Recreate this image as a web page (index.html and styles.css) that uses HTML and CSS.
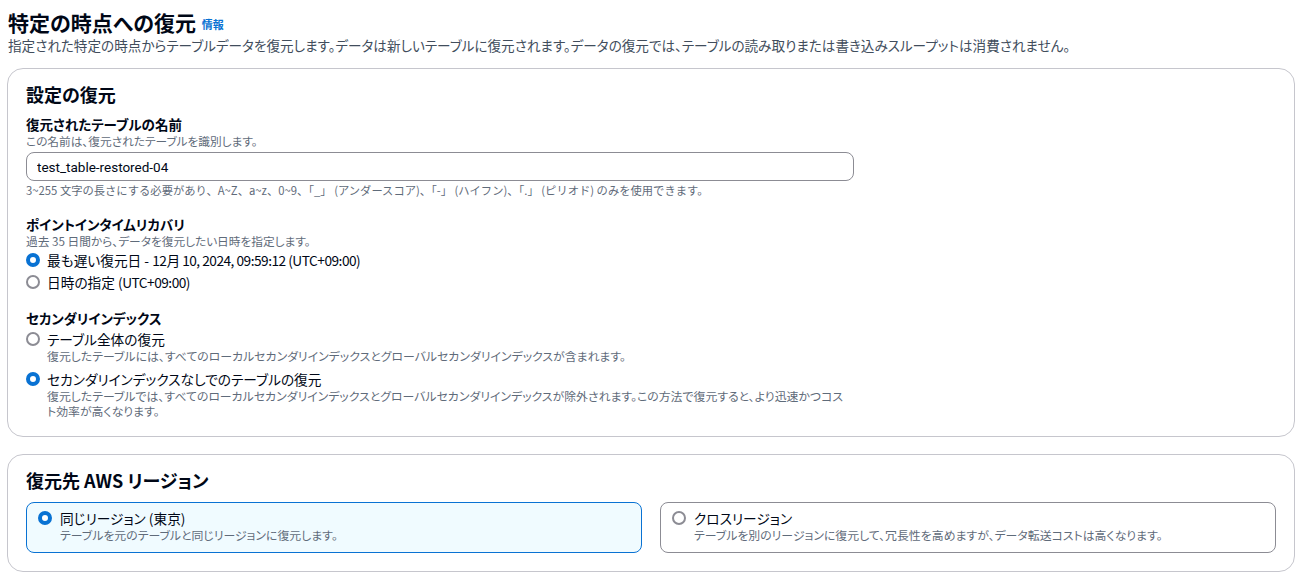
FILE: index.html
```html
<!DOCTYPE html>
<html lang="ja">
<head>
<meta charset="utf-8">
<title>特定の時点への復元</title>
<link rel="stylesheet" href="styles.css">
</head>
<body>
<main class="page">
  <header class="page-header">
    <h1 class="page-title">特定の時点への復元 <a class="info-link" href="#">情報</a></h1>
    <p class="page-desc">指定された特定の時点からテーブルデータを復元します。データは新しいテーブルに復元されます。データの復元では、テーブルの読み取りまたは書き込みスループットは消費されません。</p>
  </header>

  <section class="card">
    <h2 class="card-title">設定の復元</h2>

    <div class="field">
      <div class="field-label">復元されたテーブルの名前</div>
      <div class="field-desc">この名前は、復元されたテーブルを識別します。</div>
      <input class="text-input" type="text" value="test_table-restored-04">
      <div class="field-hint">3~255 文字の長さにする必要があり、A~Z、a~z、0~9、「_」 (アンダースコア)、「-」 (ハイフン)、「.」 (ピリオド) のみを使用できます。</div>
    </div>

    <div class="field field-pitr">
      <div class="field-label">ポイントインタイムリカバリ</div>
      <div class="field-desc">過去 35 日間から、データを復元したい日時を指定します。</div>
      <div class="radio-group tight">
        <label class="radio-row">
          <span class="radio checked"></span>
          <span class="radio-text">最も遅い復元日 - <span class="timestamp">12月 10, 2024, 09:59:12 (UTC+09:00)</span></span>
        </label>
        <label class="radio-row">
          <span class="radio"></span>
          <span class="radio-text">日時の指定 <span class="timestamp">(UTC+09:00)</span></span>
        </label>
      </div>
    </div>

    <div class="field field-index">
      <div class="field-label">セカンダリインデックス</div>
      <div class="radio-group loose">
        <label class="radio-row">
          <span class="radio"></span>
          <span class="radio-body">
            <span class="radio-text">テーブル全体の復元</span>
            <span class="radio-desc">復元したテーブルには、すべてのローカルセカンダリインデックスとグローバルセカンダリインデックスが含まれます。</span>
          </span>
        </label>
        <label class="radio-row">
          <span class="radio checked"></span>
          <span class="radio-body">
            <span class="radio-text">セカンダリインデックスなしでのテーブルの復元</span>
            <span class="radio-desc">復元したテーブルでは、すべてのローカルセカンダリインデックスとグローバルセカンダリインデックスが除外されます。この方法で復元すると、より迅速かつコスト効率が高くなります。</span>
          </span>
        </label>
      </div>
    </div>
  </section>

  <section class="card card-region">
    <h2 class="card-title">復元先 AWS リージョン</h2>
    <div class="tiles">
      <label class="tile selected">
        <span class="radio checked"></span>
        <span class="radio-body">
          <span class="radio-text">同じリージョン (東京)</span>
          <span class="radio-desc">テーブルを元のテーブルと同じリージョンに復元します。</span>
        </span>
      </label>
      <label class="tile">
        <span class="radio"></span>
        <span class="radio-body">
          <span class="radio-text">クロスリージョン</span>
          <span class="radio-desc">テーブルを別のリージョンに復元して、冗長性を高めますが、データ転送コストは高くなります。</span>
        </span>
      </label>
    </div>
  </section>
</main>
</body>
</html>
```

FILE: styles.css
```css
* {
  box-sizing: border-box;
}

html, body {
  margin: 0;
  padding: 0;
  background: #ffffff;
}

body {
  font-family: "Noto Sans CJK JP", sans-serif;
  font-feature-settings: "palt";
  color: #000716;
}

.page {
  padding: 10px 13px 0 7px;
}

/* Page header */
.page-header {
  padding-left: 1px;
}

.page-title {
  margin: 0;
  font-size: 21px;
  line-height: 25px;
  font-weight: 700;
  color: #000716;
}

.info-link {
  font-size: 11px;
  line-height: 1;
  font-weight: 700;
  color: #0972d3;
  text-decoration: none;
  vertical-align: 2px;
  margin-left: 1px;
}

.page-desc {
  margin: 0;
  font-size: 13.6px;
  line-height: 20px;
  color: #414d5c;
}

/* Containers */
.card {
  margin-top: 13px;
  border: 1px solid #c6c6cd;
  border-radius: 16px;
  padding: 14px 18px 18px;
}

.card-region {
  margin-top: 17px;
  padding: 14px 18px 18px;
}

.card-title {
  margin: 0;
  font-size: 18px;
  line-height: 22px;
  font-weight: 700;
}

.field {
  max-width: 828px;
  margin-top: 10px;
}

.field-pitr {
  margin-top: 18px;
}

.field-index {
  max-width: 820px;
  margin-top: 17px;
}

.field-label {
  font-size: 13.5px;
  line-height: 18px;
  font-weight: 700;
}

.field-desc {
  font-size: 11.7px;
  line-height: 16px;
  color: #5f6b7a;
}

.text-input {
  display: block;
  width: 100%;
  height: 29px;
  margin-top: 3px;
  padding: 0 10px;
  border: 1px solid #8c8c94;
  border-radius: 8px;
  font-family: Roboto, "Noto Sans CJK JP", sans-serif;
  font-size: 13.5px;
  color: #000716;
  background: #ffffff;
  outline: none;
}

.field-hint {
  margin-top: 2px;
  font-size: 11.3px;
  line-height: 14px;
  font-feature-settings: normal;
  color: #5f6b7a;
}

/* Radio groups */
.radio-group {
  display: flex;
  flex-direction: column;
}

.radio-group.tight {
  margin-top: 1px;
  gap: 2px;
}

.radio-group.loose {
  margin-top: 3px;
  gap: 7px;
}

.radio-row {
  display: flex;
  align-items: flex-start;
  gap: 7px;
}

.radio {
  flex: none;
  width: 14px;
  height: 14px;
  margin-top: 3px;
  border-radius: 50%;
  border: 2px solid #8c8c94;
  background: #ffffff;
}

.radio.checked {
  border: 4px solid #0972d3;
}

.radio-body {
  display: flex;
  flex-direction: column;
}

.radio-text {
  font-size: 13.7px;
  line-height: 20px;
  color: #000716;
}

.timestamp {
  letter-spacing: -0.5px;
}

.radio-group.loose .radio-text {
  line-height: 18px;
}

.radio-group.loose .radio {
  margin-top: 2px;
}

.radio-desc {
  font-size: 11.9px;
  line-height: 15px;
  color: #5f6b7a;
}

/* Region tiles */
.tiles {
  display: grid;
  grid-template-columns: 1fr 1fr;
  gap: 18px;
  margin-top: 11px;
}

.tile {
  display: flex;
  align-items: flex-start;
  gap: 8px;
  height: 51px;
  padding: 6px 12px 8px 11px;
  border: 1px solid #8c8c94;
  border-radius: 8px;
  background: #ffffff;
}

.tile.selected {
  border-color: #0972d3;
  background: #f0fbff;
}

.tile .radio {
  margin-top: 2px;
}

.tile .radio-text {
  line-height: 18px;
}

.tile .radio-desc {
  line-height: 16px;
}
```
